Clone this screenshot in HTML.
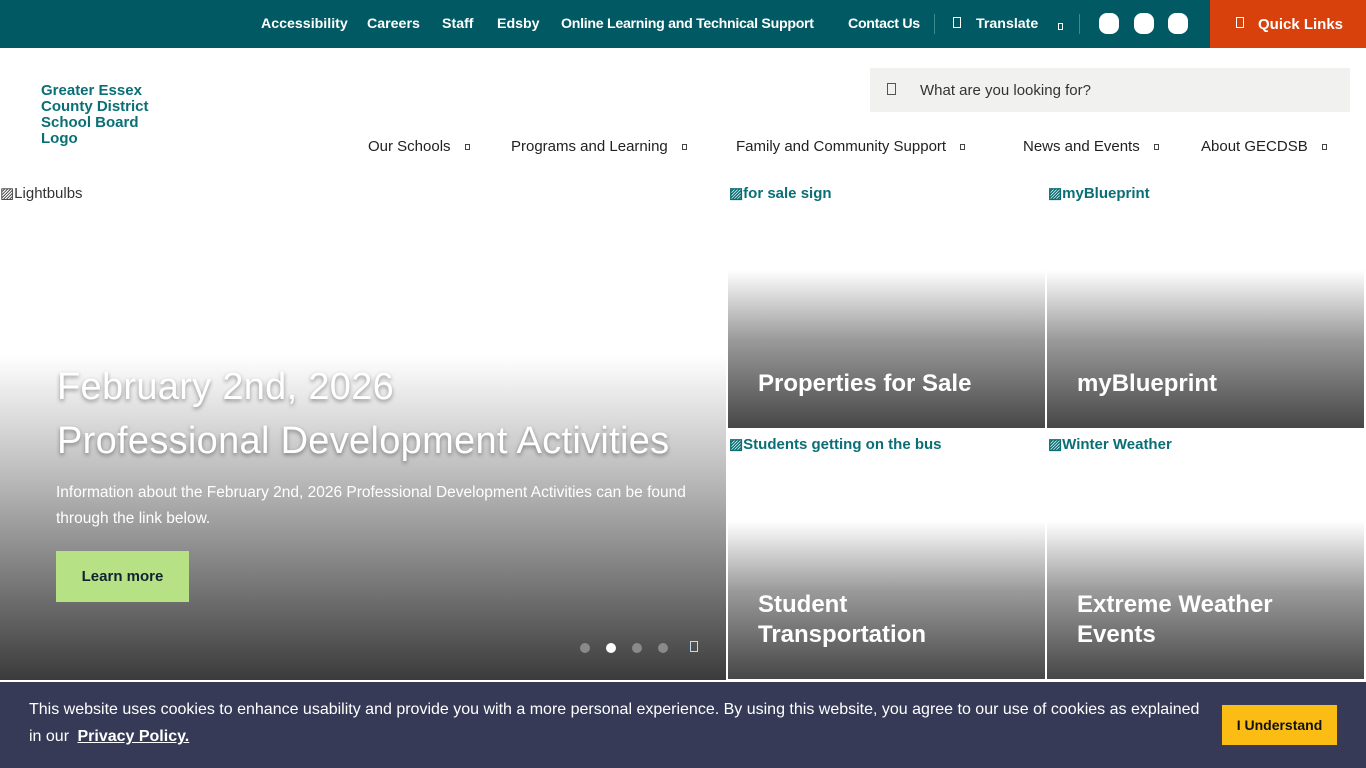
<!DOCTYPE html>
<html><head><meta charset="utf-8"><style>
*{margin:0;padding:0;box-sizing:border-box}
body{width:1366px;height:768px;overflow:hidden;background:#fff;font-family:"Liberation Sans",sans-serif;position:relative}
.top{position:absolute;left:0;top:0;width:1366px;height:48px;background:#015a63;color:#fff;font-weight:bold;font-size:14.2px}
.top span{position:absolute;top:16px}
.ql{position:absolute;left:1210px;top:0;width:156px;height:48px;background:#d8400c}
.box{display:inline-block;width:8px;height:11px;border:1px solid #fff}
.circ{position:absolute;top:13px;width:20px;height:21px;border-radius:8px;background:#fff}
.sep{position:absolute;top:14px;width:1px;height:20px;background:#3f8890}
.logo{position:absolute;left:41px;top:83px;color:#0a6f75;font-weight:bold;font-size:15px;line-height:16px;width:130px}
.search{position:absolute;left:870px;top:68px;width:480px;height:44px;background:#f1f1ef;font-size:15px;color:#333}
.nav span{position:absolute;top:138px;font-size:15px;color:#222}
.nav i{display:inline-block;width:5px;height:6px;border:1px solid #444;margin-left:14px;vertical-align:middle}
.hero{position:absolute;left:0;top:180px;width:726px;height:500px;background:linear-gradient(#fff 0,#fff 175px,#b9b9b9 300px,#3b3b3b 500px)}
.tile{position:absolute;width:317px;height:248px;background:linear-gradient(#fff 0,#fff 90px,#9a9a9a 160px,#474747 248px)}
.tile b{position:absolute;left:1px;top:4px;color:#0a6f75;font-size:15px;font-weight:bold}
.tile h3{position:absolute;left:30px;color:#fff;font-size:24px;line-height:30px;font-weight:bold}
.cookie{position:absolute;left:0;top:682px;width:1366px;height:86px;background:#363a56;color:#fff;font-size:16px;line-height:27px}
</style></head><body>
<div class="top">
<span style="left:261px">Accessibility</span><span style="left:367px">Careers</span><span style="left:442px">Staff</span><span style="left:497px">Edsby</span><span style="left:561px;letter-spacing:-0.3px">Online Learning and Technical Support</span><span style="left:848px;letter-spacing:-0.3px">Contact Us</span>
<div class="sep" style="left:934px"></div>
<span style="left:953px"><i class="box"></i></span><span style="left:976px">Translate</span><span style="left:1058px;top:18px"><i class="box" style="width:5px;height:7px"></i></span>
<div class="sep" style="left:1079px"></div>
<div class="circ" style="left:1099px"></div><div class="circ" style="left:1134px"></div><div class="circ" style="left:1168px"></div>
<div class="ql"><span style="left:26px"><i class="box"></i></span><span style="left:48px;font-size:15px">Quick Links</span></div>
</div>
<div class="logo">Greater Essex County District School Board Logo</div>
<div class="search"><span style="position:absolute;left:17px;top:15px;width:9px;height:12px;border:1px solid #555"></span><span style="position:absolute;left:50px;top:14px">What are you looking for?</span></div>
<div class="nav"><span style="left:368px">Our Schools<i></i></span><span style="left:511px">Programs and Learning<i></i></span><span style="left:736px">Family and Community Support<i></i></span><span style="left:1023px">News and Events<i></i></span><span style="left:1201px">About GECDSB<i></i></span></div>
<div class="hero">
<span style="position:absolute;left:0;top:4px;font-size:15px;color:#333">▨Lightbulbs</span>
<div style="position:absolute;left:57px;top:180px;color:#fff;font-size:38px;line-height:54px;text-shadow:0 2px 4px rgba(0,0,0,.4);letter-spacing:0.3px">February 2nd, 2026<br>Professional Development Activities</div>
<div style="position:absolute;left:56px;top:300px;width:680px;color:#fff;font-size:15.5px;line-height:26px">Information about the February 2nd, 2026 Professional Development Activities can be found through the link below.</div>
<div style="position:absolute;left:56px;top:371px;width:133px;height:51px;background:#b6e285;color:#123;font-weight:bold;font-size:15px;line-height:51px;text-align:center">Learn more</div>
<div style="position:absolute;left:580px;top:463px;width:10px;height:10px;border-radius:50%;background:#8a8a8a"></div>
<div style="position:absolute;left:606px;top:463px;width:10px;height:10px;border-radius:50%;background:#fff"></div>
<div style="position:absolute;left:632px;top:463px;width:10px;height:10px;border-radius:50%;background:#8a8a8a"></div>
<div style="position:absolute;left:658px;top:463px;width:10px;height:10px;border-radius:50%;background:#8a8a8a"></div>
<div style="position:absolute;left:690px;top:461px;width:8px;height:11px;border:1px solid #bde"></div>
</div>
<div class="tile" style="left:728px;top:180px"><b>▨for sale sign</b><h3 style="top:189px">Properties for Sale</h3></div>
<div class="tile" style="left:1047px;top:180px"><b>▨myBlueprint</b><h3 style="top:189px">myBlueprint</h3></div>
<div class="tile" style="left:728px;top:431px"><b>▨Students getting on the bus</b><h3 style="top:159px">Student<br>Transportation</h3></div>
<div class="tile" style="left:1047px;top:431px"><b>▨Winter Weather</b><h3 style="top:159px">Extreme Weather<br>Events</h3></div>
<div class="cookie"><div style="position:absolute;left:29px;top:14px;width:1180px">This website uses cookies to enhance usability and provide you with a more personal experience. By using this website, you agree to our use of cookies as explained in our <b style="text-decoration:underline;margin-left:4px">Privacy Policy.</b></div>
<div style="position:absolute;left:1222px;top:23px;width:115px;height:40px;background:#fbbd13;color:#111;font-weight:bold;font-size:14px;line-height:40px;text-align:center">I Understand</div></div>
</body></html>
